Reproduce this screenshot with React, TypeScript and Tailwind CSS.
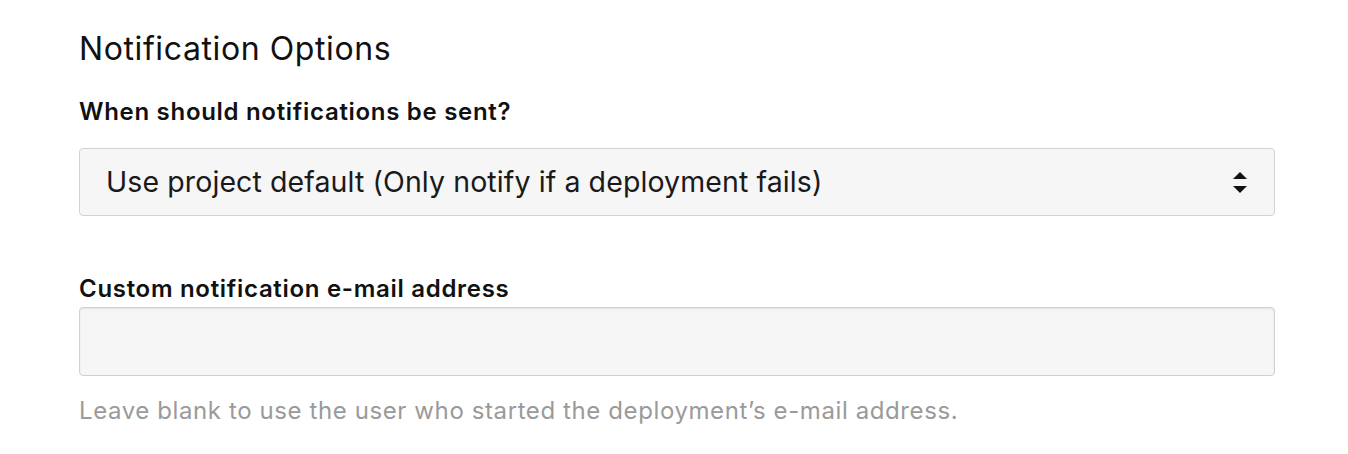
export default function App() {
  return (
    <div className="min-h-[454px] bg-white px-[79px] pt-[29px] text-[#111] font-['Inter','Noto_Sans',sans-serif]">
      <h2 className="text-[32px] leading-[40px] font-normal tracking-[0.6px] text-[#111]">Notification Options</h2>

      <div className="mt-[27px]">
        <label className="block text-[24px] leading-[32px] font-semibold tracking-[0.7px]">When should notifications be sent?</label>
        <div className="mt-[20px] flex h-[68px] w-[1196px] items-center justify-between rounded-[4px] border border-[#d3d3d3] bg-[#f6f6f6] pl-[26px] pr-[27px]">
          <span className="text-[28.5px] leading-[36px] tracking-[0.1px] text-[#1a1a1a]">Use project default (Only notify if a deployment fails)</span>
          <svg width="14" height="21" viewBox="0 0 14 21">
            <path d="M7 0 L14 7 L0 7 Z" fill="#111" />
            <path d="M0 14 L14 14 L7 21 Z" fill="#111" />
          </svg>
        </div>
      </div>

      <div className="mt-[57px]">
        <label className="block text-[24px] leading-[32px] font-semibold tracking-[0.7px]">Custom notification e-mail address</label>
        <div className="mt-[2px] h-[69px] w-[1196px] rounded-[4px] border border-[#d0d0d0] bg-[#f6f6f6] shadow-[inset_0_1px_2px_rgba(0,0,0,0.08)]" />
        <p className="mt-[19px] text-[24px] leading-[32px] tracking-[0.6px] text-[#9a9a9a]">
          Leave blank to use the user who started the deployment’s e-mail address.
        </p>
      </div>
    </div>
  );
}
